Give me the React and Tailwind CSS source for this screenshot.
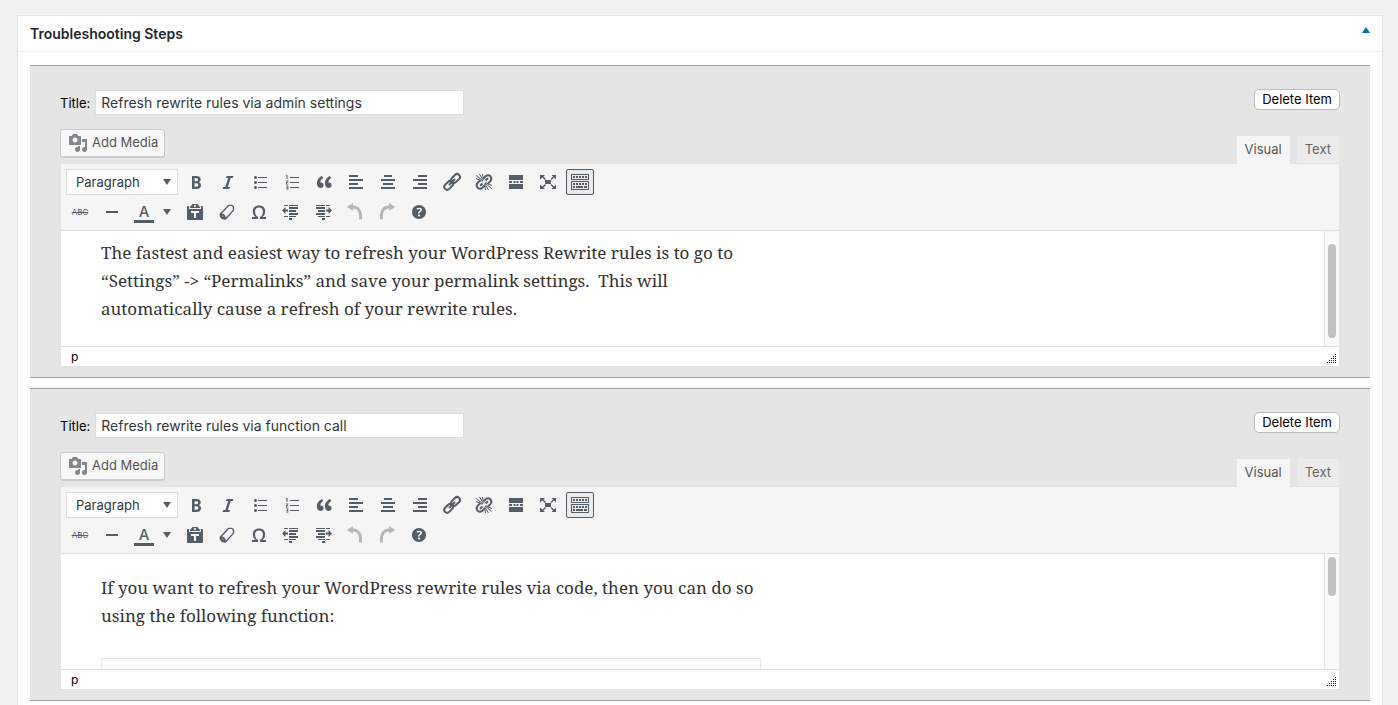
import React from "react";

const paths = {
  bold: "M6 4v13h4.54c1.37 0 2.46-.33 3.26-1 .8-.66 1.2-1.58 1.2-2.77 0-.84-.17-1.51-.51-2.01s-.9-.85-1.67-1.03v-.09c.57-.1 1.02-.4 1.36-.9s.51-1.13.51-1.91c0-1.14-.39-1.98-1.17-2.5C12.75 4.26 11.5 4 9.78 4H6zm2.57 5.15V6.26h1.36c.73 0 1.27.11 1.61.32.34.22.51.58.51 1.07 0 .54-.16.92-.47 1.15s-.82.35-1.51.35h-1.5zm0 2.19h1.6c1.44 0 2.16.53 2.16 1.61 0 .6-.17 1.05-.51 1.34s-.86.43-1.57.43H8.57v-3.38z",
  italic: "M14.78 6h-2.13l-2.8 9h2.12l-.62 2H4.6l.62-2h2.14l2.8-9H8.03l.62-2h6.75z",
  ul: "M5.5 7C4.67 7 4 6.33 4 5.5 4 4.68 4.67 4 5.5 4 6.32 4 7 4.68 7 5.5 7 6.33 6.32 7 5.5 7zM8 5h9v1H8V5zm-2.5 7c-.83 0-1.5-.67-1.5-1.5C4 9.68 4.67 9 5.5 9c.82 0 1.5.68 1.5 1.5 0 .83-.68 1.5-1.5 1.5zM8 10h9v1H8v-1zm-2.5 7c-.83 0-1.5-.67-1.5-1.5 0-.82.67-1.5 1.5-1.5.82 0 1.5.68 1.5 1.5 0 .83-.68 1.5-1.5 1.5zM8 15h9v1H8v-1z",
  ol: "M8 5h9v1H8zM8 10h9v1H8zM8 15h9v1H8zM4.6 3h.9v4h-1V4.1l-.8.4v-.8zM4 8.500h2.200v2.200H4.900v1h1.400v.8H4v-2.400h1.300v-.8H4zM4 13.500h2.300v4H4v-.8h1.400v-.8H4.400v-.7h1v-.9H4z",
  quote: "M9.49 13.22c0-.74-.2-1.38-.61-1.9-.62-.78-1.83-.88-2.53-.72-.29-1.65 1.11-3.75 2.92-4.65L7.88 4c-2.73 1.3-5.42 4.28-4.96 8.05C3.21 14.43 4.59 16 6.54 16c.85 0 1.56-.25 2.12-.75s.83-1.18.83-2.03zm8.05 0c0-.74-.2-1.38-.61-1.9-.63-.78-1.83-.88-2.53-.72-.29-1.65 1.11-3.75 2.92-4.65L15.93 4c-2.73 1.3-5.41 4.28-4.95 8.05.29 2.38 1.66 3.95 3.61 3.95.85 0 1.56-.25 2.12-.75s.83-1.18.83-2.03z",
  left: "M3 3h9v2H3zM3 7h14v2H3zM3 11h9v2H3zM3 15h14v2H3z",
  center: "M6 3h8v2H6zM3 7h14v2H3zM5 11h10v2H5zM3 15h14v2H3z",
  right: "M8 3h9v2H8zM3 7h14v2H3zM8 11h9v2H8zM3 15h14v2H3z",
  more: "M3 3h14v5H3zM3 9h3v2H3zM7.500 9h2v2h-2zM10.500 9h2v2h-2zM14 9h3v2h-3zM3 12h14v5H3z",
  expand: "M7 8h6v4H7zM2 3h5L5.500 4.500 8 7l-1 1-2.500-2.500L2 7.500zM18 3v4.500l-2-2L13.500 8l-1-1L15 4.500 13.500 3zM2 17v-4.500l2.500 2L7 12l1 1-2.500 2.500L7 17zM18 17h-4.500l1.500-1.500-2.500-2.500 1-1 2.500 2.500 2-2z",
  hr: "M4 9h12v2H4z",
  paste: "M12.380 2L15 5v1H5V5l2.640-3h4.740zM10 5c.55 0 1-.44 1-1 0-.55-.45-1-1-1s-1 .45-1 1c0 .56.45 1 1 1zm5.450-1H17c.55 0 1 .45 1 1v12c0 .56-.45 1-1 1H3c-.55 0-1-.44-1-1V5c0-.55.45-1 1-1h1.550L4 4.630V7h12V4.630zM14 11V9H6v2h3v5h2v-5h3z",
  omega: "M10 5.400c1.270 0 2.240.36 2.910 1.080.66.71 1 1.760 1 3.130 0 1.280-.23 2.370-.69 3.270-.47.890-1.270 1.520-2.220 2.120v2h6v-2h-3.690c.92-.64 1.620-1.340 2.120-2.340.49-1.010.74-2.130.74-3.350 0-1.780-.55-3.190-1.650-4.220S11.920 3.540 10 3.540s-3.430.53-4.520 1.570c-1.100 1.040-1.650 2.440-1.650 4.200 0 1.210.24 2.310.73 3.330.48 1.010 1.190 1.710 2.100 2.360H3v2h6v-2c-.98-.64-1.800-1.280-2.240-2.170-.45-.89-.67-1.960-.67-3.220 0-1.370.33-2.410 1-3.130C7.750 5.760 8.720 5.400 10 5.400z",
  outdent: "M3 3h4v1H3zM8 3h9v1H8zM8 5h9v2H8zM8 8h7v2H8zM8 11h9v2H8zM3 14h4v1H3zM8 14h7v1H8zM8 16h3v2H8zM1 8.500L4.500 5v2.500H7v2H4.500V12z",
  indent: "M3 3h9v1H3zM13 3h4v1h-4zM3 5h9v2H3zM5 8h7v2H5zM3 11h9v2H3zM5 14h7v1H5zM13 14h4v1h-4zM9 16h3v2H9zM19 8.500L15.500 5v2.500H13v2h2.500V12z",
  undo: "M8 1v2.500c6 0 9.800 4.500 9 14h-3c.6-7.500-1.500-11-6-11v2.200L1.800 5z",
  redo: "M12 1v2.500c-6 0-9.800 4.500-9 14h3c-.6-7.500 1.500-11 6-11v2.200L18.200 5z",
  help: "M17 10c0-3.870-3.140-7-7-7-3.870 0-7 3.130-7 7s3.130 7 7 7c3.860 0 7-3.130 7-7zm-6.300 1.480H9.140v-.43c0-.38.08-.7.24-.98s.46-.57.880-.89c.41-.29.68-.53.810-.71.14-.18.2-.39.2-.62 0-.25-.09-.44-.28-.58-.19-.13-.45-.19-.79-.19-.58 0-1.250.19-2 .57l-.64-1.280c.87-.49 1.800-.74 2.770-.74.81 0 1.450.2 1.920.58.480.39.71.91.71 1.550 0 .43-.09.8-.29 1.110-.19.32-.57.67-1.110 1.060-.38.28-.61.49-.71.630-.1.150-.15.340-.15.570v.35zm-1.470 2.740c-.18-.17-.27-.42-.27-.73 0-.33.08-.58.26-.75s.43-.25.77-.25c.32 0 .57.090.75.260s.27.42.27.74c0 .3-.09.550-.27.720-.18.180-.43.270-.75.270-.33 0-.58-.09-.76-.26z",
};

function Glyph({ name }) {
  return (
    <svg viewBox="0 0 20 20" className="size-5 shrink-0" fill="currentColor" aria-hidden="true">
      {paths[name] && <path fillRule="evenodd" d={paths[name]} />}
      {name === "link" && (
        <g fill="none" stroke="currentColor" strokeWidth="2">
          <rect x="-4.900" y="-2.900" width="9.800" height="5.800" rx="2.900" transform="translate(6.600 13.400) rotate(-45)" />
          <rect x="-4.900" y="-2.900" width="9.800" height="5.800" rx="2.900" transform="translate(13.600 6.400) rotate(-45)" />
          <path d="M7.500 12.500l5-5" strokeLinecap="round" />
        </g>
      )}
      {name === "unlink" && (
        <g fill="none" stroke="currentColor">
          <path
            strokeWidth="2"
            d="M9.500 6.500l2.100-2.200q2.400-2 4.800 0 2 2.400 0 4.800L13.500 12M10.500 13.500l-2.100 2.200q-2.400 2-4.800 0-2-2.400 0-4.800L6.500 8"
          />
          <path strokeWidth="2" d="M11.500 8.500l2.500-2.200M8.500 11.500L6 13.700" />
          <path d="M9 9L2.500 3.500M9.300 8.300L5.500 2M9.500 7.500L8.500 2M8.300 9.300L2 6.500M11 11l6.500 5.500M10.700 11.700l3.800 6.300M10.500 12.500l1 5.500M11.700 10.700L18 13.500" />
        </g>
      )}
      {name === "eraser" && (
        <g fill="none" stroke="currentColor" strokeWidth="1.400" strokeLinejoin="round">
          <path d="M11.500 3.400h3.300q1.500.6 1.700 2.200v2.500L9 16.500q-3.800 1.200-5.500-2.200v-2.300z" />
          <path d="M3.500 12q3.600.2 4.600 4M3.600 12.300q.2 3.700 4 4.100l1-.2" strokeWidth="2" />
        </g>
      )}
    </svg>
  );
}

function KeyboardIcon() {
  return (
    <svg viewBox="0 0 20 18" className="h-[18px] w-5 shrink-0" fill="currentColor" aria-hidden="true">
      <path fillRule="evenodd" d="M1 1h18v6H1zM2 2v4h16V2zM1 8h18v9H1zM2 9v7h16V9z" />
      <path d="M3 3h2v2H3zM6 3h2v2H6zM9 3h2v2H9zM12 3h2v2h-2zM15 3h2v2h-2zM3 10h2v2H3zM6 10h2v2H6zM9 10h2v2H9zM12 10h2v2h-2zM15 10h2v2h-2zM3 13h2v2H3zM6 13h7v2H6zM14 13h3v2h-3z" />
    </svg>
  );
}

function MediaIcon() {
  return (
    <svg viewBox="0 0 20 20" className="size-5 text-[#82878c]" fill="currentColor" aria-hidden="true">
      <path fillRule="evenodd" d="M13 11V4c0-.55-.45-1-1-1h-1.670L9 1H5L3.670 3H2c-.55 0-1 .45-1 1v7c0 .55.45 1 1 1h10c.55 0 1-.45 1-1zM7 4.500c1.380 0 2.500 1.120 2.500 2.500S8.380 9.500 7 9.500 4.500 8.380 4.500 7 5.620 4.500 7 4.500zM14 6h5v10.500c0 1.380-1.120 2.500-2.500 2.500S14 17.880 14 16.500s1.120-2.500 2.500-2.500c.17 0 .34.020.5.050V9h-3V6zm-4 8.050V13h2v3.500c0 1.380-1.120 2.500-2.500 2.500S7 17.880 7 16.500 8.120 14 9.500 14c.17 0 .34.020.5.050z" />
    </svg>
  );
}

function Tool({ label, children, className = "" }) {
  return (
    <button
      type="button"
      aria-label={label}
      className={`mx-0.5 flex h-[26px] w-7 items-center justify-center text-[#555d66] ${className}`}
    >
      {children}
    </button>
  );
}

const rowOne = [
  ["Bold", "bold"],
  ["Italic", "italic"],
  ["Bulleted list", "ul"],
  ["Numbered list", "ol"],
  ["Blockquote", "quote"],
  ["Align left", "left"],
  ["Align center", "center"],
  ["Align right", "right"],
  ["Insert link", "link"],
  ["Remove link", "unlink"],
  ["Read more", "more"],
  ["Fullscreen", "expand"],
];

const rowTwo = [
  ["Paste as text", "paste"],
  ["Clear formatting", "eraser"],
  ["Special character", "omega"],
  ["Decrease indent", "outdent"],
  ["Increase indent", "indent"],
];

function Caret() {
  return (
    <svg viewBox="0 0 8 6" className="h-1.5 w-2" fill="#555d66" aria-hidden="true">
      <path d="M0 0h8L4 6z" />
    </svg>
  );
}

function Toolbar({ id }) {
  return (
    <div className="border-b border-[#dddddd] bg-[#f5f5f5] px-[3px] pt-1 pb-1">
      <div className="flex h-7 items-center">
        <div className="relative mx-0.5 flex w-28 items-center">
          <select
            id={`${id}-format`}
            aria-label="Text format"
            className="h-[26px] w-full appearance-none border border-[#dddddd] bg-white pt-px pl-[9px] text-[13px] text-[#32373c]"
          >
            <option>Paragraph</option>
          </select>
          <span className="pointer-events-none absolute right-[7px]">
            <Caret />
          </span>
        </div>
        {rowOne.map(([label, name]) => (
          <Tool key={name} label={label}>
            <Glyph name={name} />
          </Tool>
        ))}
        <Tool label="Toolbar toggle" className="rounded-xs border border-[#555d66] bg-[#ebebeb]">
          <KeyboardIcon />
        </Tool>
      </div>
      <div className="mt-0.5 flex h-7 items-center">
        <Tool label="Strikethrough">
          <span className="text-[8px] line-through">ABC</span>
        </Tool>
        <Tool label="Horizontal line">
          <Glyph name="hr" />
        </Tool>
        <Tool label="Text color">
          <span className="mt-0.5 w-5 border-b-[3px] border-[#555d66] text-center text-[15px] leading-4 font-medium">A</span>
        </Tool>
        <button type="button" aria-label="Choose text color" className="mr-[5px] flex h-[26px] w-3.5 items-center justify-center">
          <Caret />
        </button>
        {rowTwo.map(([label, name]) => (
          <Tool key={name} label={label}>
            <Glyph name={name} />
          </Tool>
        ))}
        <Tool label="Undo" className="opacity-40">
          <Glyph name="undo" />
        </Tool>
        <Tool label="Redo" className="opacity-40">
          <Glyph name="redo" />
        </Tool>
        <Tool label="Keyboard shortcuts">
          <Glyph name="help" />
        </Tool>
      </div>
    </div>
  );
}

function Grip() {
  const dots = [];
  for (let row = 0; row < 5; row += 1) {
    for (let col = 4 - row; col < 5; col += 1) dots.push([col * 2, row * 2]);
  }
  return (
    <svg viewBox="0 0 10 10" className="size-2.5" fill="#222222" shapeRendering="crispEdges" aria-hidden="true">
      {dots.map(([x, y]) => (
        <rect key={`${x}-${y}`} x={x} y={y} width="1" height="1" />
      ))}
    </svg>
  );
}

function Step({ id, title, thumb, children }) {
  return (
    <section className="border-y border-[#a0a0a0] bg-[#e5e5e5] px-[30px] pt-6 pb-2.5">
      <div className="flex items-start justify-between">
        <div className="flex items-center gap-[5px]">
          <label htmlFor={id} className="pt-0.5 text-[13px] text-black">
            Title:
          </label>
          <input
            id={id}
            defaultValue={title}
            className="h-[25px] w-[369px] border border-[#dddddd] bg-white px-[5px] pb-px text-[14px] text-[#32373c]"
          />
        </div>
        <button
          type="button"
          className="-mt-px h-[21px] rounded-[5px] border border-[#bcbcbc] bg-white px-[7px] text-[13px] leading-[19px] text-black"
        >
          Delete Item
        </button>
      </div>
      <div className="mt-3.5 flex items-end justify-between">
        <button
          type="button"
          className="mb-[5px] flex h-[29px] items-center gap-1 rounded-[3px] border border-b-2 border-[#cccccc] bg-[#f7f7f7] px-1.5 pl-[7px] text-[13px] text-[#555555]"
        >
          <MediaIcon />
          Add Media
        </button>
        <div className="relative mr-px -mb-px flex gap-[7px]">
          <button type="button" className="h-7 bg-[#f5f5f5] px-2 text-[13px] text-[#555555]">
            Visual
          </button>
          <button type="button" className="h-7 border-b border-[#e2e2e2] bg-[#ebebeb] px-2 text-[13px] text-[#666666]">
            Text
          </button>
        </div>
      </div>
      <div className="border border-[#e2e2e2]">
        <Toolbar id={id} />
        <div className="flex h-[115px] bg-white">
          <div className="min-w-0 flex-1 overflow-hidden px-10 font-['Noto_Serif','DejaVu_Serif_Condensed','DejaVu_Serif',serif] text-[17px] leading-7 text-[#333333]">
            {children}
          </div>
          <div className="w-[15px] border-l border-[#e8e8e8] bg-[#fafafa] px-[3px]">{thumb}</div>
        </div>
        <div className="flex h-5 items-center justify-between border-t border-[#dddddd] bg-white pr-0.5 pl-2.5 text-[12px] text-black">
          <span>p</span>
          <span className="self-end pb-0.5">
            <Grip />
          </span>
        </div>
      </div>
    </section>
  );
}

export default function App() {
  return (
    <main className="h-screen overflow-hidden bg-[#f1f1f1] px-[15px] pt-[15px] pl-[17px] font-[Inter,sans-serif]">
      <div className="min-h-screen border border-[#e5e5e5] bg-white">
        <header className="flex h-9 items-center justify-between border-b border-[#eeeeee] px-3">
          <h2 className="text-[14px] font-semibold text-[#23282d]">Troubleshooting Steps</h2>
          <button type="button" aria-label="Toggle panel" className="-mt-2">
            <svg viewBox="0 0 8 6" className="h-1.5 w-2" fill="#0073aa" aria-hidden="true">
              <path d="M4 0l4 6H0z" />
            </svg>
          </button>
        </header>
        <div className="flex flex-col gap-2.5 px-3 pt-[13px]">
          <Step
            id="step-one"
            title="Refresh rewrite rules via admin settings"
            thumb={<div className="mt-[13px] h-[94px] w-2 rounded-full bg-[#c1c1c1]" />}
          >
            <p className="max-w-[660px] pt-2">
              The fastest and easiest way to refresh your WordPress Rewrite rules is to go to “Settings” -&gt; “Permalinks” and save
              your permalink settings.&nbsp; This will automatically cause a refresh of your rewrite rules.
            </p>
          </Step>
          <Step
            id="step-two"
            title="Refresh rewrite rules via function call"
            thumb={<div className="mt-[3px] h-[39px] w-2 rounded-full bg-[#c1c1c1]" />}
          >
            <p className="max-w-[660px] pt-5">
              If you want to refresh your WordPress rewrite rules via code, then you can do so using the following function:
            </p>
            <div className="mt-7 h-16 max-w-[660px] border border-[#e8e8e8] bg-[#fcfcfc]" />
          </Step>
        </div>
      </div>
    </main>
  );
}
